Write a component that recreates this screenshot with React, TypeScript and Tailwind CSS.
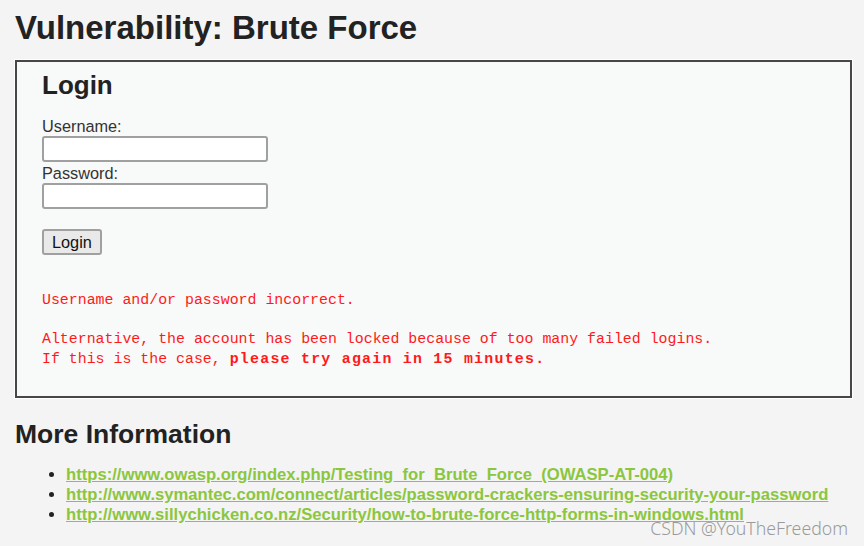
import React from 'react';

const links = [
  'https://www.owasp.org/index.php/Testing_for_Brute_Force_(OWASP-AT-004)',
  'http://www.symantec.com/connect/articles/password-crackers-ensuring-security-your-password',
  'http://www.sillychicken.co.nz/Security/how-to-brute-force-http-forms-in-windows.html',
];

export default function App() {
  return (
    <div className="relative w-[864px] h-[546px] overflow-hidden bg-[#f4f4f4] font-['Liberation_Sans',Arial,sans-serif] text-[#222]">
      <div className="pl-[15px] pr-[12px] pt-[9px]">
        <h1 className="text-[33px] font-bold leading-[38px] text-[#222]">Vulnerability: Brute Force</h1>

        {/* Login box */}
        <div className="mt-[13px] border-2 border-[#474747] bg-[#f8f9f9] pl-[25px] pt-[7px] h-[338px] outline outline-1 outline-white">
          <h2 className="text-[26px] font-bold leading-[32px] text-[#222]">Login</h2>
          <form className="mt-[16px] flex flex-col items-start text-[16.3px] text-[#333]">
            <label className="leading-[18px]">Username:</label>
            <input type="text" className="mt-[1px] w-[226px] h-[26px] bg-white border-2 border-[#a0a0a0] rounded-[3px]" />
            <label className="mt-[2px] leading-[18px]">Password:</label>
            <input type="password" className="mt-[1px] w-[226px] h-[26px] bg-white border-2 border-[#a0a0a0] rounded-[3px]" />
            <button type="button" className="mt-[20px] h-[26px] px-[8px] bg-[#e9e9e9] border-2 border-[#a0a0a0] rounded-[3px] text-[16.3px] text-[#111] leading-[20px]">Login</button>
          </form>
          <pre className="mt-[36px] font-['Liberation_Mono','Courier_New',monospace] text-[14.9px] leading-[19.5px] text-[#ff1a1a]">
            {'Username and/or password incorrect.\n\nAlternative, the account has been locked because of too many failed logins.\nIf this is the case, '}
            <b className="tracking-[1.25px]">please try again in 15 minutes.</b>
          </pre>
        </div>

        <h2 className="mt-[20px] text-[26.5px] font-bold leading-[32px] text-[#222]">More Information</h2>
        <ul className="mt-[15px] pl-[51px] list-disc text-[16.65px] leading-[20px] text-[#222]">
          {links.map(l => (
            <li key={l}>
              <a href="#" className="font-bold text-[#8cc63e] underline">{l}</a>
            </li>
          ))}
        </ul>
      </div>

      {/* watermark */}
      <div className="absolute right-[16px] bottom-[4px] text-[17.7px] text-[#9a9a9a] font-['Noto_Sans',sans-serif] font-light">CSDN @YouTheFreedom</div>
    </div>
  );
}
